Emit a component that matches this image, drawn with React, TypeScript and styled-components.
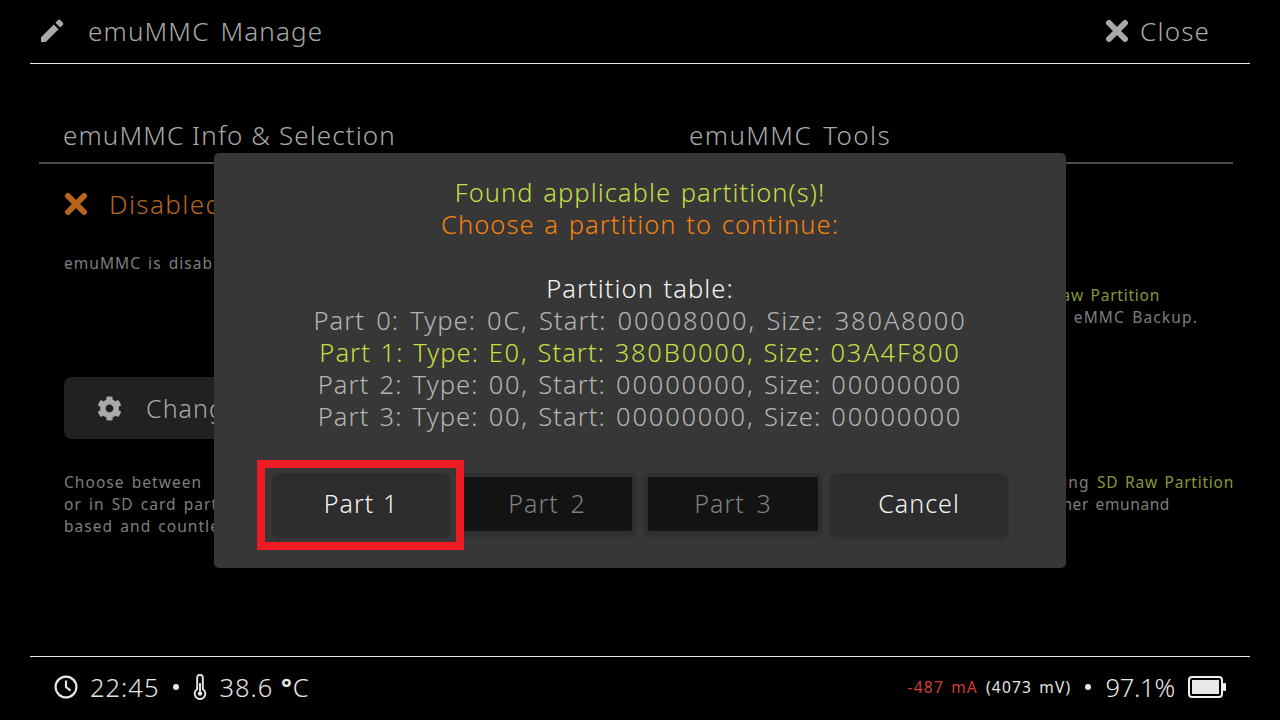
import React from 'react';
import styled, { createGlobalStyle } from 'styled-components';
import { FaCog } from 'react-icons/fa';

const GlobalStyle = createGlobalStyle`
  html, body {
    margin: 0;
    padding: 0;
    background: #000;
  }
  body {
    font-family: "Noto Sans", "Open Sans", "Liberation Sans", sans-serif;
    font-weight: 350;
  }
`;

const Screen = styled.div`
  position: relative;
  width: 1280px;
  height: 720px;
  overflow: hidden;
  background: #000;
  display: flex;
  flex-direction: column;
`;

const Header = styled.header`
  height: 64px;
  margin: 0 30px;
  padding: 0 40px 2px 9px;
  box-sizing: border-box;
  border-bottom: 1px solid #e8e8e8;
  display: flex;
  align-items: center;
  justify-content: space-between;
  color: #a9a9a9;
  font-size: 26px;
  letter-spacing: 1.15px;
  word-spacing: 3px;
`;

const HeaderGroup = styled.div<{ $gap: number }>`
  display: flex;
  align-items: center;
  gap: ${(p) => p.$gap}px;
`;

const Body = styled.main`
  flex: 1;
  padding: 0 47px 0 39px;
  display: flex;
  flex-direction: column;
`;

const Tabs = styled.div`
  height: 100px;
  box-sizing: border-box;
  border-bottom: 2px solid #4c4c4c;
  display: grid;
  grid-template-columns: 626px 1fr;
  align-items: end;
  padding: 0 0 9px 24px;
  color: #a9a9a9;
  font-size: 26px;
`;

const Tab = styled.span<{ $tracking: number; $wordGap: number }>`
  letter-spacing: ${(p) => p.$tracking}px;
  word-spacing: ${(p) => p.$wordGap}px;
`;

const Columns = styled.div`
  display: grid;
  grid-template-columns: 625px 1fr;
  padding-left: 25px;
`;

const Column = styled.section`
  display: flex;
  flex-direction: column;
`;

const Status = styled.div`
  display: flex;
  align-items: center;
  gap: 21px;
  height: 79px;
  color: #b8651c;
  font-size: 26px;
  letter-spacing: 1.4px;
`;

const Note = styled.p`
  margin: 0;
  color: #7e7e7e;
  font-size: 15.5px;
  font-weight: 400;
  line-height: 22px;
  letter-spacing: 1.05px;
  word-spacing: 2px;
  white-space: nowrap;
`;

const StatusNote = styled(Note)`
  margin-top: 9px;
`;

const ChangeButton = styled.div`
  margin-top: 103px;
  width: 300px;
  height: 62px;
  box-sizing: border-box;
  padding-left: 33px;
  border-radius: 8px;
  background: #212121;
  display: flex;
  align-items: center;
  gap: 24px;
  color: #a9a9a9;
  font-size: 25px;
  letter-spacing: 1.05px;
`;

const BottomNote = styled.div`
  margin-top: 32px;
`;

const RightLines = styled.div<{ $top: number }>`
  margin-top: ${(p) => p.$top}px;
`;

const RightLine = styled(Note)<{ $end: number; $tracking?: number }>`
  width: ${(p) => p.$end}px;
  text-align: right;
  letter-spacing: ${(p) => p.$tracking ?? 1.15}px;
`;

const Hint = styled.span`
  color: #87983a;
  letter-spacing: 0.75px;
`;

const Footer = styled.footer`
  height: 64px;
  margin: 0 30px;
  box-sizing: border-box;
  border-top: 1px solid #e8e8e8;
  display: flex;
  align-items: center;
  justify-content: space-between;
  padding: 0 24px 4px;
  color: #e6e6e6;
`;

const FooterGroup = styled.div`
  display: flex;
  align-items: center;
`;

const Reading = styled.span<{ $ml?: number }>`
  font-size: 25.5px;
  letter-spacing: 1px;
  margin-left: ${(p) => p.$ml ?? 0}px;
`;

const Percent = styled.span`
  font-size: 25.5px;
  letter-spacing: -0.2px;
`;

const Degree = styled.span`
  font-weight: 700;
`;

const Small = styled.span<{ $color: string; $ml?: number }>`
  font-size: 15.5px;
  font-weight: 400;
  letter-spacing: 1.2px;
  word-spacing: 2px;
  color: ${(p) => p.$color};
  margin-left: ${(p) => p.$ml ?? 0}px;
`;

const Dot = styled.span<{ $mx: number }>`
  width: 6px;
  height: 6px;
  border-radius: 50%;
  background: #e6e6e6;
  margin: 0 ${(p) => p.$mx}px;
`;

const BatterySlot = styled.span`
  display: flex;
  margin-left: 13px;
`;

const Modal = styled.div`
  position: absolute;
  left: 214px;
  top: 153px;
  width: 852px;
  height: 415px;
  box-sizing: border-box;
  padding-top: 23px;
  border-radius: 5px;
  background: #373737;
  display: flex;
  flex-direction: column;
  align-items: center;
`;

const Message = styled.div<{ $color: string; $mt?: number; $wordGap?: number }>`
  color: ${(p) => p.$color};
  font-size: 25.5px;
  line-height: 32px;
  letter-spacing: 1.05px;
  word-spacing: ${(p) => p.$wordGap ?? 2}px;
  margin-top: ${(p) => p.$mt ?? 0}px;
  white-space: nowrap;
`;

const Hex = styled.span`
  letter-spacing: 1.8px;
`;

const Buttons = styled.div`
  margin-top: 41px;
  display: flex;
  gap: 8px;
`;

const PartButton = styled.div<{ $disabled?: boolean }>`
  width: 178px;
  height: ${(p) => (p.$disabled ? 62 : 64)}px;
  box-sizing: border-box;
  display: flex;
  align-items: center;
  justify-content: center;
  padding-bottom: ${(p) => (p.$disabled ? 2 : 4)}px;
  font-size: 25px;
  letter-spacing: 1.05px;
  word-spacing: ${(p) => (p.$disabled ? 4 : 1)}px;
  border-radius: ${(p) => (p.$disabled ? 6 : 8)}px;
  color: ${(p) => (p.$disabled ? '#808080' : '#f4f4f4')};
  background: ${(p) => (p.$disabled ? '#131313' : '#2d2d2d')};
  border: ${(p) => (p.$disabled ? '4px solid #2f2f2f' : 'none')};
  box-shadow: 0 2px 3px rgba(0, 0, 0, 0.12);
`;

const Highlight = styled.div`
  position: absolute;
  left: 257px;
  top: 460px;
  width: 207px;
  height: 90px;
  box-sizing: border-box;
  border: 8px solid #ed1c24;
`;

const PencilIcon = () => (
  <svg width="26" height="26" viewBox="0 0 26 26" fill="#a9a9a9">
    <path d="M2 19.2 14.8 6.4l4.8 4.8L6.8 24H2zM16.4 4.8l2.7-2.7a1.5 1.5 0 0 1 2.1 0l2.7 2.7a1.5 1.5 0 0 1 0 2.1l-2.7 2.7z" />
  </svg>
);

const CrossIcon = ({ color }: { color: string }) => (
  <svg width="24" height="24" viewBox="0 0 24 24" fill="none" stroke={color} strokeWidth="6" strokeLinecap="round">
    <path d="M4 4l16 16M20 4 4 20" />
  </svg>
);

const ClockIcon = () => (
  <svg width="24" height="24" viewBox="0 0 24 24" fill="none" stroke="#e6e6e6" strokeWidth="2.2">
    <circle cx="12" cy="12" r="10.4" />
    <path d="M12 5.5V12l4.5 3.6" />
  </svg>
);

const ThermometerIcon = () => (
  <svg width="14" height="26" viewBox="0 0 14 26" fill="none" stroke="#e6e6e6" strokeWidth="1.9">
    <path d="M4.2 3.6a2.8 2.8 0 0 1 5.6 0v11.6a5.3 5.3 0 1 1-5.6 0z" />
    <circle cx="7" cy="19.6" r="2.2" fill="#e6e6e6" stroke="none" />
    <path d="M7 9v10" />
  </svg>
);

const BatteryIcon = () => (
  <svg width="38" height="22" viewBox="0 0 38 22">
    <rect x="1" y="1" width="33" height="20" rx="3" fill="none" stroke="#f0f0f0" strokeWidth="2" />
    <rect x="4" y="4" width="27" height="14" fill="#e8e8e8" />
    <rect x="35" y="7" width="3" height="8" rx="1" fill="#f0f0f0" />
  </svg>
);

const partRow = (part: string, type: string, start: string, size: string) => (
  <>
    Part {part}: Type: <Hex>{type}</Hex>, Start: <Hex>{start}</Hex>, Size: <Hex>{size}</Hex>
  </>
);

export default function App() {
  return (
    <Screen>
      <GlobalStyle />
      <Header>
        <HeaderGroup $gap={23}>
          <PencilIcon />
          <span>emuMMC Manage</span>
        </HeaderGroup>
        <HeaderGroup $gap={11}>
          <CrossIcon color="#a9a9a9" />
          <span>Close</span>
        </HeaderGroup>
      </Header>
      <Body>
        <Tabs>
          <Tab $tracking={1.1} $wordGap={0}>
            emuMMC Info &amp; Selection
          </Tab>
          <Tab $tracking={1.4} $wordGap={3}>
            emuMMC Tools
          </Tab>
        </Tabs>
        <Columns>
          <Column>
            <Status>
              <CrossIcon color="#b8651c" />
              <span>Disabled</span>
            </Status>
            <StatusNote>emuMMC is disabled.</StatusNote>
            <ChangeButton>
              <FaCog size={25} color="#a9a9a9" />
              <span>Change</span>
            </ChangeButton>
            <BottomNote>
              <Note>Choose between</Note>
              <Note>or in SD card partitions.</Note>
              <Note>based and countless others.</Note>
            </BottomNote>
          </Column>
          <Column>
            <RightLines $top={120}>
              <RightLine $end={471}>
                Create emuMMC on <Hint>SD Raw Partition</Hint>
              </RightLine>
              <RightLine $end={509}>from your eMMC Backup.</RightLine>
            </RightLines>
            <RightLines $top={143}>
              <RightLine $end={545}>
                Migrate using <Hint>SD Raw Partition</Hint>
              </RightLine>
              <RightLine $end={481} $tracking={0.6}>
                or other emunand
              </RightLine>
            </RightLines>
          </Column>
        </Columns>
      </Body>
      <Footer>
        <FooterGroup>
          <ClockIcon />
          <Reading $ml={12}>22:45</Reading>
          <Dot $mx={14} />
          <ThermometerIcon />
          <Reading $ml={12}>
            38.6 <Degree>°</Degree>C
          </Reading>
        </FooterGroup>
        <FooterGroup>
          <Small $color="#d33f33">-487 mA</Small>
          <Small $color="#e6e6e6" $ml={8}>
            (4073 mV)
          </Small>
          <Dot $mx={14} />
          <Percent>97.1%</Percent>
          <BatterySlot>
            <BatteryIcon />
          </BatterySlot>
        </FooterGroup>
      </Footer>
      <Modal>
        <Message $color="#c6df42">Found applicable partition(s)!</Message>
        <Message $color="#f5820d">Choose a partition to continue:</Message>
        <Message $color="#f4f4f4" $mt={32}>
          Partition table:
        </Message>
        <Message $color="#b4b4b4" $wordGap={3.4}>
          {partRow('0', '0C', '00008000', '380A8000')}
        </Message>
        <Message $color="#c6df42">{partRow('1', 'E0', '380B0000', '03A4F800')}</Message>
        <Message $color="#b4b4b4" $wordGap={2.5}>
          {partRow('2', '00', '00000000', '00000000')}
        </Message>
        <Message $color="#b4b4b4" $wordGap={2.5}>
          {partRow('3', '00', '00000000', '00000000')}
        </Message>
        <Buttons>
          <PartButton>Part 1</PartButton>
          <PartButton $disabled>Part 2</PartButton>
          <PartButton $disabled>Part 3</PartButton>
          <PartButton>Cancel</PartButton>
        </Buttons>
      </Modal>
      <Highlight />
    </Screen>
  );
}
